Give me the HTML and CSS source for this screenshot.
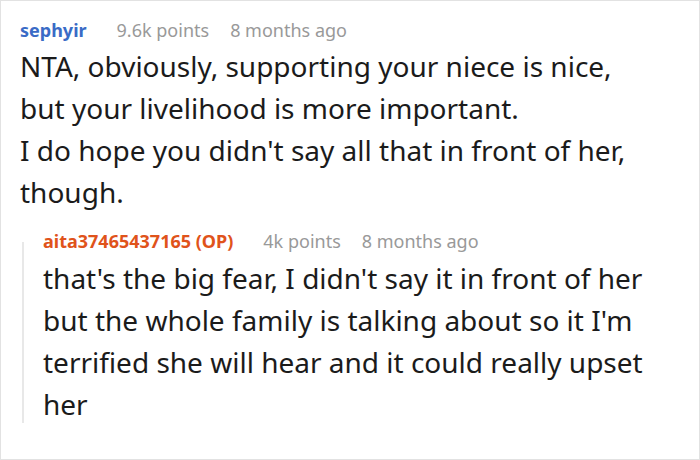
FILE: index.html
```html
<!DOCTYPE html>
<html>
<head>
<meta charset="utf-8">
<link rel="stylesheet" href="styles.css">
</head>
<body>
<div class="card">
  <div class="comment">
    <div class="meta">
      <span class="author">sephyir</span>
      <span class="points">9.6k points</span>
      <span class="time">8 months ago</span>
    </div>
    <div class="body">NTA, obviously, supporting your niece is nice,<br>but your livelihood is more important.<br>I do hope you didn't say all that in front of her, though.</div>
  </div>
  <div class="reply">
    <div class="meta">
      <span class="author op">aita37465437165 (OP)</span>
      <span class="points">4k points</span>
      <span class="time">8 months ago</span>
    </div>
    <div class="body">that's the big fear, I didn't say it in front of her but the whole family is talking about so it I'm terrified she will hear and it could really upset her</div>
  </div>
</div>
</body>
</html>
```

FILE: styles.css
```css
html, body {
  margin: 0;
  padding: 0;
  background: #fff;
}
.card {
  box-sizing: border-box;
  width: 700px;
  height: 460px;
  border: 1px solid #e2e2e2;
  padding: 17px 19px 0 19px;
  font-family: "Noto Sans", sans-serif;
  color: #1b1b1b;
}
.meta {
  display: flex;
  align-items: baseline;
  font-size: 18px;
  line-height: 24px;
  color: #999;
}
.author {
  font-weight: bold;
  color: #3a6bc6;
  margin-right: 30px;
}
.author.op {
  color: #e0531b;
}
.points {
  margin-right: 21px;
}
.body {
  font-size: 28px;
  line-height: 42px;
  margin-top: 3px;
}
.reply {
  margin: 16px 0 0 2px;
  padding-left: 21px;
  padding-bottom: 0;
  background: linear-gradient(#e8e8e8, #e8e8e8) no-repeat 0 13px / 2px calc(100% - 15px);
}
.reply .body {
  margin-top: 4px;
}
```
